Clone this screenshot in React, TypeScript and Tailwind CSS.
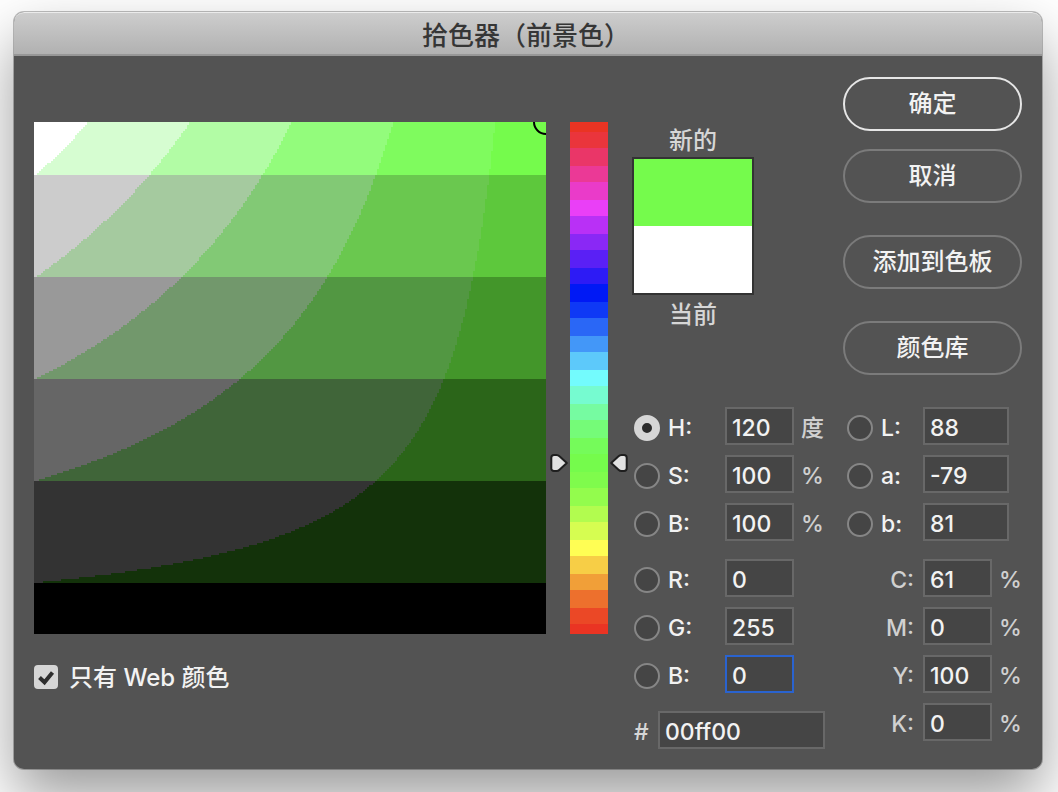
import { useState } from 'react';

interface Channel {
  id: string;
  label: string;
  value: string;
  unit?: string;
}

const FIELD_SIZE = 512;
const CELL = 2;

// web-safe shades of the green hue: one row per brightness step, saturation grows to the right
const WEB_SHADES = [
  ['#ffffff', '#d6fdd1', '#b2fca5', '#93fc7c', '#7ffb5e', '#75fb4c'],
  ['#cccccc', '#a5ca9f', '#82c975', '#6ac84f', '#5dc83c'],
  ['#999999', '#72986c', '#529742', '#43962a'],
  ['#666666', '#406539', '#2b6519'],
  ['#333333', '#13320a'],
  ['#000000'],
];

// [height, colour] from the top of the slider down
const HUE_STEPS: [number, string][] = [
  [10, '#ea3423'],
  [16, '#ea353c'],
  [18, '#ea3668'],
  [16, '#eb3996'],
  [18, '#ea3bc9'],
  [16, '#ea3ff7'],
  [18, '#b930f6'],
  [16, '#8a28f5'],
  [18, '#5a20f5'],
  [16, '#2d1bf5'],
  [18, '#0019f5'],
  [16, '#0f39f5'],
  [18, '#2a67f6'],
  [16, '#4397f8'],
  [18, '#5dc9fa'],
  [16, '#73fbfd'],
  [18, '#76fbd0'],
  [16, '#76fba1'],
  [18, '#75fb78'],
  [16, '#75fb5a'],
  [18, '#75fb4c'],
  [16, '#7ffb4c'],
  [18, '#93fc4d'],
  [16, '#b2fc4f'],
  [18, '#d6fd51'],
  [16, '#fffe54'],
  [18, '#f7ce46'],
  [16, '#f19f38'],
  [18, '#ed702d'],
  [16, '#eb4826'],
  [10, '#ea3423'],
];

const HSB: Channel[] = [
  { id: 'hsb-h', label: 'H:', value: '120', unit: '度' },
  { id: 'hsb-s', label: 'S:', value: '100', unit: '%' },
  { id: 'hsb-b', label: 'B:', value: '100', unit: '%' },
];

const RGB: Channel[] = [
  { id: 'rgb-r', label: 'R:', value: '0' },
  { id: 'rgb-g', label: 'G:', value: '255' },
  { id: 'rgb-b', label: 'B:', value: '0' },
];

const LAB: Channel[] = [
  { id: 'lab-l', label: 'L:', value: '88' },
  { id: 'lab-a', label: 'a:', value: '-79' },
  { id: 'lab-b', label: 'b:', value: '81' },
];

const CMYK: Channel[] = [
  { id: 'cmyk-c', label: 'C:', value: '61', unit: '%' },
  { id: 'cmyk-m', label: 'M:', value: '0', unit: '%' },
  { id: 'cmyk-y', label: 'Y:', value: '100', unit: '%' },
  { id: 'cmyk-k', label: 'K:', value: '0', unit: '%' },
];

// One path per shade, built from runs of cells. The cell grid starts half a cell
// outside the field, so the first row is cut off by the viewBox.
const buildShadePaths = () => {
  const paths: Record<string, string> = {};
  for (let y = -1; y < FIELD_SIZE; y += CELL) {
    const brightness = Math.min(1, 1 - (y - 0.7) / 510);
    const row = Math.min(5, Math.max(0, 5 - Math.round(brightness * 5)));
    const shades = WEB_SHADES[row];
    let start = 0;
    shades.forEach((shade, i) => {
      const limit = (5 - row - i - 0.5) / 5;
      const edge = 509.5 * (1 - limit / brightness) + 2.3;
      const end =
        i === shades.length - 1
          ? FIELD_SIZE
          : Math.max(start, Math.round((edge - 1) / CELL) * CELL + 1);
      if (end > start) {
        paths[shade] = (paths[shade] ?? '') + `M${start} ${y}H${end}V${y + CELL}H${start}Z`;
      }
      start = end;
    });
  }
  return Object.entries(paths);
};

const shadePaths = buildShadePaths();

function ShadeField() {
  return (
    <svg viewBox="0 0 512 512" className="block w-[512px] h-[512px]" role="img" aria-label="颜色">
      <g shapeRendering="crispEdges">
        {shadePaths.map(([shade, d]) => (
          <path key={shade} d={d} fill={shade} />
        ))}
      </g>
      <circle cx="512" cy="0" r="12" fill="none" stroke="#000" strokeWidth="2" />
    </svg>
  );
}

function HueSlider() {
  return (
    <div className="relative w-[38px] shrink-0">
      {HUE_STEPS.map(([height, color], i) => (
        <div key={i} style={{ height, backgroundColor: color }} />
      ))}
      <svg viewBox="0 0 78 20" className="absolute -left-5 top-[331px] w-[78px] h-5" aria-hidden="true">
        <g fill="#e2e2e2" stroke="#1f1f1f" strokeWidth="2" strokeLinejoin="round">
          <path d="M4 2h2.500c1.400 0 2.200.5 3 1.300L16.800 10l-7.300 6.700c-.8.800-1.600 1.300-3 1.300H4c-1.700 0-2.700-1-2.700-2.700V4.700C1.300 3 2.300 2 4 2Z" />
          <path d="M74 2h-2.500c-1.400 0-2.200.5-3 1.300L61.200 10l7.300 6.700c.8.800 1.600 1.300 3 1.300H74c1.700 0 2.700-1 2.700-2.700V4.700C76.700 3 75.700 2 74 2Z" />
        </g>
      </svg>
    </div>
  );
}

interface ChannelRadioProps {
  channel: Channel;
  active: string;
  onSelect: (id: string) => void;
}

function ChannelRadio({ channel, active, onSelect }: ChannelRadioProps) {
  return (
    <input
      type="radio"
      name="channel"
      id={`${channel.id}-radio`}
      aria-label={channel.label}
      checked={active === channel.id}
      onChange={() => onSelect(channel.id)}
      className="appearance-none mt-1 size-[26px] shrink-0 rounded-full border-2 border-[#868686] bg-[#454545] checked:border-8 checked:border-[#d6d6d6] checked:bg-[#2b2b2b]"
    />
  );
}

const inputClass =
  'h-[38px] border-2 bg-[#454545] px-[5px] pt-[3px] text-[#f2f2f2] outline-none focus:border-[#2a63cf]';
const buttonClass =
  'h-[54px] rounded-full border-2 text-[#f2f2f2] hover:bg-[#5e5e5e] transition-colors';

export default function ColorPickerDialog() {
  const [active, setActive] = useState('hsb-h');
  const [webOnly, setWebOnly] = useState(true);

  return (
    <main className="min-h-screen overflow-hidden bg-white pt-3 pb-[22px] pl-[14px] pr-4 font-[Inter,'Noto_Sans_CJK_SC',sans-serif] text-[23px] leading-[34px] font-medium">
      <section className="rounded-[10px] bg-[#535353] shadow-[0_0_0_1px_rgba(0,0,0,0.25),0_28px_60px_rgba(0,0,0,0.4)]">
        {/* Title bar */}
        <header className="h-11 rounded-t-[10px] border-t border-b-2 border-t-[#ebebeb] border-b-[#979797] bg-linear-to-b from-[#cdcdcd] to-[#b1b1b1] flex items-center justify-center">
          <h1 className="pt-1 pr-1 text-[26px] font-medium text-[#363636]">拾色器（前景色）</h1>
        </header>

        <div className="flex px-5 pb-5">
          <div className="pt-[66px] w-[512px] shrink-0">
            <ShadeField />
            <label className="mt-6 flex items-center gap-[11px] text-[#f2f2f2]">
              <span className="relative flex size-6">
                <input
                  type="checkbox"
                  checked={webOnly}
                  onChange={(e) => setWebOnly(e.target.checked)}
                  className="appearance-none size-6 rounded-[4px] border-2 border-[#868686] bg-[#454545] checked:border-[#d6d6d6] checked:bg-[#d6d6d6]"
                />
                {webOnly && (
                  <svg viewBox="0 0 24 24" className="absolute inset-0 size-6 pointer-events-none">
                    <path d="M5.500 12.500l5 4.800L18.500 7.500" fill="none" stroke="#2e2e2e" strokeWidth="4" />
                  </svg>
                )}
              </span>
              <span className="pt-[3px] text-2xl leading-[34px]">只有 Web 颜色</span>
            </label>
          </div>

          <div className="ml-6 pt-[66px]">
            <HueSlider />
          </div>

          <div className="ml-6 flex-1">
            <div className="flex justify-between pt-[21px]">
              {/* New / current swatches */}
              <div className="w-[122px] pt-12 text-center text-2xl text-[#d6d6d6]">
                <p>新的</p>
                <div className="border-2 border-[#333333]">
                  <div className="h-[67px] bg-[#75fb4c]" />
                  <div className="h-[67px] bg-white" />
                </div>
                <p className="mt-1">当前</p>
              </div>

              <div className="flex w-[179px] flex-col text-2xl">
                <button className={`${buttonClass} border-[#e6e6e6]`}>确定</button>
                <button className={`${buttonClass} mt-[18px] border-[#7b7b7b]`}>取消</button>
                <button className={`${buttonClass} mt-8 border-[#7b7b7b]`}>添加到色板</button>
                <button className={`${buttonClass} mt-8 border-[#7b7b7b]`}>颜色库</button>
              </div>
            </div>

            <div className="mt-8 flex justify-between pl-0.5">
              {/* HSB and RGB */}
              <div>
                {[HSB, RGB].map((group, i) => (
                  <div key={i} className="mb-[18px] space-y-[10px]">
                    {group.map((channel) => (
                      <div key={channel.id} className="flex items-center">
                        <ChannelRadio channel={channel} active={active} onSelect={setActive} />
                        <label htmlFor={channel.id} className="ml-2 w-[57px] pt-[3px] text-[#f2f2f2]">
                          {channel.label}
                        </label>
                        <input
                          id={channel.id}
                          type="text"
                          defaultValue={channel.value}
                          className={`${inputClass} w-[69px] ${channel.id === 'rgb-b' ? 'border-[#2a63cf]' : 'border-[#686868]'}`}
                        />
                        {channel.unit && (
                          <span className="ml-[7px] pt-[3px] text-[#d0d0d0]">{channel.unit}</span>
                        )}
                      </div>
                    ))}
                  </div>
                ))}
                <div className="flex items-center">
                  <label htmlFor="hex" className="w-6 pt-[3px] text-[#d6d6d6]">
                    #
                  </label>
                  <input
                    id="hex"
                    type="text"
                    defaultValue="00ff00"
                    className={`${inputClass} w-[167px] border-[#686868]`}
                  />
                </div>
              </div>

              {/* Lab and CMYK */}
              <div className="w-[175px]">
                <div className="mb-[18px] space-y-[10px]">
                  {LAB.map((channel) => (
                    <div key={channel.id} className="flex items-center">
                      <ChannelRadio channel={channel} active={active} onSelect={setActive} />
                      <label htmlFor={channel.id} className="ml-2 w-[42px] pt-[3px] text-[#f2f2f2]">
                        {channel.label}
                      </label>
                      <input
                        id={channel.id}
                        type="text"
                        defaultValue={channel.value}
                        className={`${inputClass} w-[86px] border-[#686868]`}
                      />
                    </div>
                  ))}
                </div>
                <div className="space-y-[10px]">
                  {CMYK.map((channel) => (
                    <div key={channel.id} className="flex items-center text-[#d0d0d0]">
                      <label htmlFor={channel.id} className="w-[67px] shrink-0 pt-[3px] text-right">
                        {channel.label}
                      </label>
                      <input
                        id={channel.id}
                        type="text"
                        defaultValue={channel.value}
                        className={`${inputClass} ml-[9px] w-[69px] shrink-0 border-[#686868]`}
                      />
                      <span className="ml-[7px] pt-[3px]">{channel.unit}</span>
                    </div>
                  ))}
                </div>
              </div>
            </div>
          </div>
        </div>
      </section>
    </main>
  );
}
